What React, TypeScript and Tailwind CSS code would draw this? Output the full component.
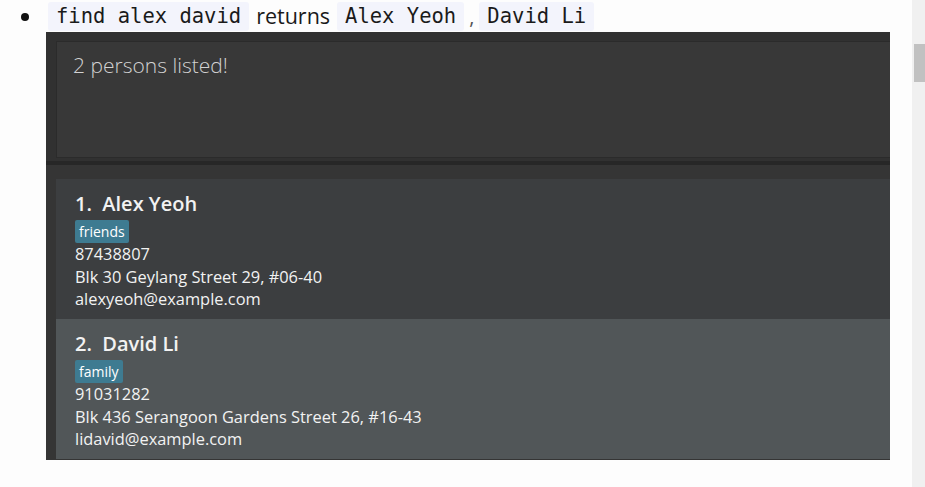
import React from "react";

const sans = { fontFamily: '"Open Sans", "Noto Sans", sans-serif' };
const mono = { fontFamily: '"DejaVu Sans Mono", "Liberation Mono", monospace' };

function Chip({ children }: { children: React.ReactNode }) {
  return (
    <span
      className="bg-[#f3f4fc] rounded-[3px] px-[8px] h-[29px] flex items-center text-[20.5px] text-[#1a1a1a]"
      style={mono}
    >
      {children}
    </span>
  );
}

function Card({
  idx,
  name,
  tag,
  phone,
  addr,
  email,
  bg,
}: {
  idx: number;
  name: string;
  tag: string;
  phone: string;
  addr: string;
  email: string;
  bg: string;
}) {
  return (
    <div className={`h-[140px] pl-[19px] pt-[12px] flex flex-col ${bg}`} style={sans}>
      <div className="text-[20px] font-semibold text-[#f2f2f2] leading-[26px] h-[28px]">
        {idx}.&nbsp; {name}
      </div>
      <div className="flex mt-[1px]">
        <span className="bg-[#3e7b91] text-white text-[14px] font-medium leading-[23px] px-[4px] rounded-[2px]">
          {tag}
        </span>
      </div>
      <div className="text-[16.4px] text-[#f2f2f2] leading-[22.5px]">{phone}</div>
      <div className="text-[16.4px] text-[#f2f2f2] leading-[22.5px]">{addr}</div>
      <div className="text-[16.4px] text-[#f2f2f2] leading-[22.5px]">{email}</div>
    </div>
  );
}

export default function App() {
  return (
    <div className="w-[925px] h-[487px] bg-[#fdfdfd] flex overflow-hidden">
      <div className="w-[912px] flex flex-col">
        <div className="h-[32px] flex items-center pl-[21px] pt-[1px]">
          <span className="w-[8px] h-[8px] rounded-full bg-[#111] mr-[19px]" />
          <Chip>find alex david</Chip>
          <span className="text-[21.5px] text-[#1a1a1a] px-[7px]" style={sans}>
            returns
          </span>
          <Chip>Alex Yeoh</Chip>
          <span className="text-[20px] text-[#555] px-[5px]" style={sans}>
            ,
          </span>
          <Chip>David Li</Chip>
        </div>
        <div className="ml-[46px] w-[844px] h-[428px] bg-[#313131] flex flex-col overflow-hidden">
          <div className="pt-[9px] pl-[10px]">
            <div className="h-[117px] bg-[#383838] border border-[#2b2b2b] border-r-0 pl-[16px] pt-[8px]">
              <div className="text-[21px] font-light text-[#d2d2d2]" style={sans}>
                2 persons listed!
              </div>
            </div>
          </div>
          <div className="h-[3px]" />
          <div className="h-[4px] bg-[#272727]" />
          <div className="flex-1 bg-[#353535] pt-[14px] pl-[10px] flex flex-col">
            <Card
              idx={1}
              name="Alex Yeoh"
              tag="friends"
              phone="87438807"
              addr="Blk 30 Geylang Street 29, #06-40"
              email="alexyeoh@example.com"
              bg="bg-[#3c3e40]"
            />
            <Card
              idx={2}
              name="David Li"
              tag="family"
              phone="91031282"
              addr="Blk 436 Serangoon Gardens Street 26, #16-43"
              email="lidavid@example.com"
              bg="bg-[#515658]"
            />
          </div>
        </div>
      </div>
      <div className="w-[13px] bg-[#f0f0f0] pt-[44px] pl-[2px]">
        <div className="h-[38px] bg-[#c1c1c1]" />
      </div>
    </div>
  );
}
